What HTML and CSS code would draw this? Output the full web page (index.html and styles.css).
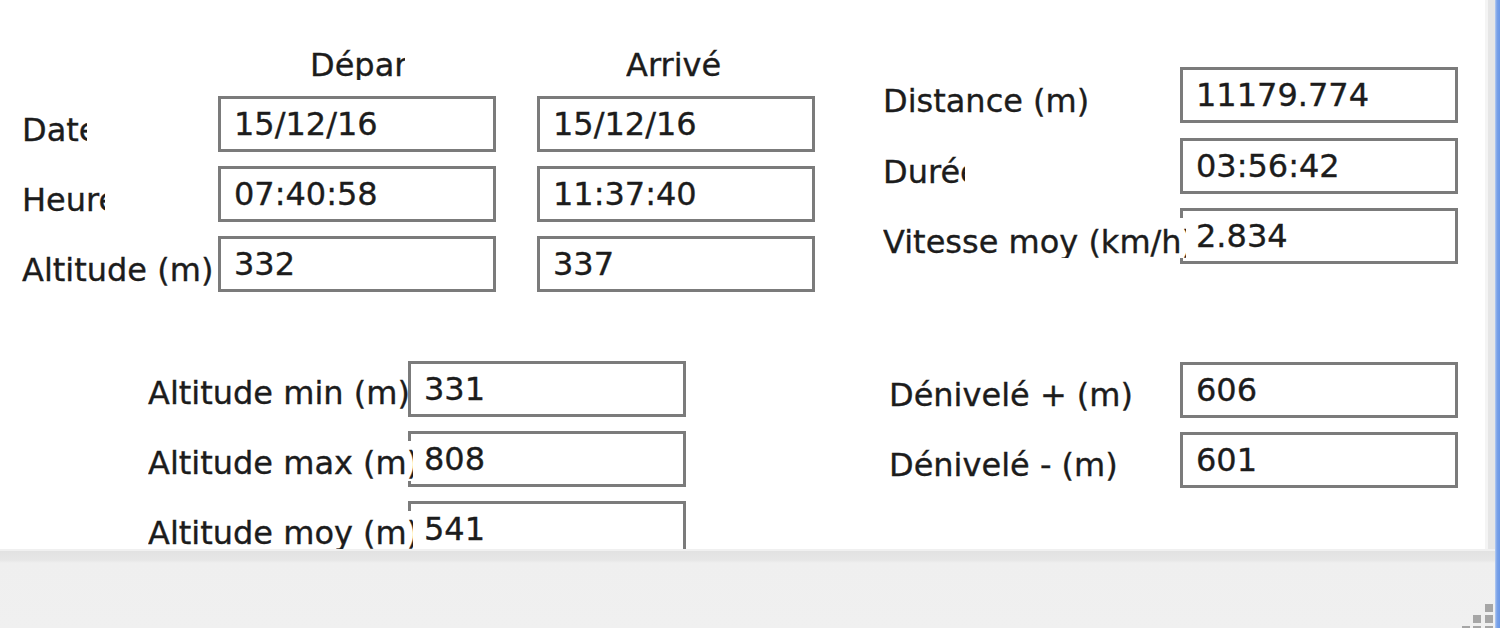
FILE: index.html
```html
<!DOCTYPE html>
<html lang="fr">
<head>
<meta charset="utf-8">
<title>Résumé de la trace</title>
<link rel="stylesheet" href="styles.css">
</head>
<body>
<div class="window">
  <div class="client">
    <div class="panel">
      <div class="top-row">
        <div class="grid-a">
          <div class="cell-empty"></div>
          <div class="head head-dep">Départ</div>
          <div class="head head-arr">Arrivée</div>

          <div class="lbl lbl-date">Date</div>
          <div class="box">15/12/16</div>
          <div class="box">15/12/16</div>

          <div class="lbl lbl-heure">Heure</div>
          <div class="box">07:40:58</div>
          <div class="box">11:37:40</div>

          <div class="lbl">Altitude (m)</div>
          <div class="box">332</div>
          <div class="box">337</div>
        </div>

        <div class="grid-b">
          <div class="lbl">Distance (m)</div>
          <div class="box">11179.774</div>

          <div class="lbl lbl-duree">Durée</div>
          <div class="box">03:56:42</div>

          <div class="lbl lbl-over lbl-vitesse">Vitesse moy (km/h)</div>
          <div class="box">2.834</div>
        </div>
      </div>

      <div class="bottom-row">
        <div class="grid-c">
          <div class="lbl lbl-c">Altitude min (m)</div>
          <div class="box">331</div>

          <div class="lbl lbl-c lbl-over">Altitude max (m)</div>
          <div class="box">808</div>

          <div class="lbl lbl-c lbl-over">Altitude moy (m)</div>
          <div class="box">541</div>
        </div>

        <div class="grid-d">
          <div class="lbl lbl-d">Dénivelé + (m)</div>
          <div class="box">606</div>

          <div class="lbl lbl-d">Dénivelé - (m)</div>
          <div class="box">601</div>
        </div>
      </div>
    </div>
    <div class="status">
      <svg class="grip" width="31" height="24" viewBox="0 0 31 24" aria-hidden="true">
        <rect x="23" y="0" width="8" height="8" fill="#a6a6a6"/>
        <rect x="11" y="11" width="8" height="8" fill="#a6a6a6"/>
        <rect x="23" y="11" width="8" height="8" fill="#a6a6a6"/>
        <rect x="0" y="22" width="8" height="8" fill="#a6a6a6"/>
        <rect x="11" y="22" width="8" height="8" fill="#a6a6a6"/>
        <rect x="23" y="22" width="8" height="8" fill="#a6a6a6"/>
      </svg>
    </div>
  </div>
  <div class="edge-blue"></div>
</div>
</body>
</html>
```

FILE: styles.css
```css
html, body {
  margin: 0;
  padding: 0;
}

body {
  width: 1500px;
  height: 628px;
  overflow: hidden;
  background: #f0f0f0;
  font-family: "DejaVu Sans", "Noto Sans", sans-serif;
  font-size: 32px;
  color: #1c1c1c;
  -webkit-text-stroke: 0.35px #1c1c1c;
}

.window {
  display: flex;
  width: 1500px;
  height: 628px;
}

.client {
  width: 1495px;
  display: flex;
  flex-direction: column;
}

.panel {
  height: 549px;
  margin-bottom: 2px;
  background: #ffffff;
  overflow: hidden;
  display: flex;
  flex-direction: column;
  border-right: 7px solid #e6e6e6;
  box-shadow: inset -3px 0 0 #f4f4f4;
}

.status {
  flex: 1;
  background: linear-gradient(#e2e2e2 0px, #e6e6e6 9px, #efefef 12px, #f0f0f0 100%);
  display: flex;
  justify-content: flex-end;
  align-items: flex-start;
  overflow: hidden;
}

.grip {
  display: block;
  margin-top: 53px;
  margin-right: 2px;
}

.edge-blue {
  width: 5px;
  background: linear-gradient(90deg, #b6cdf2 0px, #7aa2e8 2px, #6a97e6 5px);
}

/* rows */
.top-row {
  display: flex;
  align-items: flex-start;
  padding-top: 46px;
}

.bottom-row {
  display: flex;
  align-items: flex-start;
  margin-top: 69px;
}

/* section grids */
.grid-a {
  margin-left: 22px;
  display: grid;
  grid-template-columns: 155px 278px 278px;
  grid-template-rows: 36px 56px 56px 56px;
  column-gap: 41px;
  row-gap: 14px;
}

.grid-b {
  margin-left: 68px;
  margin-top: 21px;
  display: grid;
  grid-template-columns: 297px 278px;
  grid-auto-rows: 56px;
  row-gap: 14.5px;
}

.grid-c {
  margin-left: 148px;
  display: grid;
  grid-template-columns: 260px 278px;
  grid-auto-rows: 56px;
  row-gap: 14px;
}

.grid-d {
  margin-left: 203px;
  margin-top: 1px;
  display: grid;
  grid-template-columns: 291px 278px;
  grid-auto-rows: 56px;
  row-gap: 14px;
}

/* headers */
.head {
  height: 34px;
  overflow: hidden;
  white-space: nowrap;
  line-height: 36px;
  padding-top: 1px;
  box-sizing: border-box;
}

.head-dep {
  margin-left: 92px;
  width: 95px;
}

.head-arr {
  margin-left: 89px;
  width: 95px;
}

/* labels */
.lbl {
  height: 56px;
  box-sizing: border-box;
  padding-top: 12px;
  line-height: 44px;
  white-space: nowrap;
}

.lbl-date {
  width: 65px;
  overflow: hidden;
}

.lbl-heure {
  width: 83px;
  overflow: hidden;
}

.lbl-duree {
  width: 82px;
  overflow: hidden;
}

.lbl-c {
  padding-top: 10px;
}

.lbl-d {
  padding-top: 11px;
}

.lbl-over {
  position: relative;
  z-index: 1;
  align-self: start;
  background: #ffffff;
  margin-top: 10px;
  height: 40px;
  padding-top: 0;
  line-height: 48px;
  overflow: hidden;
}

.lbl-vitesse {
  width: 303px;
}

.grid-c .lbl-over {
  line-height: 44px;
  width: 265px;
}

/* text boxes */
.box {
  height: 56px;
  box-sizing: border-box;
  border: 3px solid #7b7b7b;
  background: #ffffff;
  padding-left: 13px;
  line-height: 50px;
  white-space: nowrap;
}
```
